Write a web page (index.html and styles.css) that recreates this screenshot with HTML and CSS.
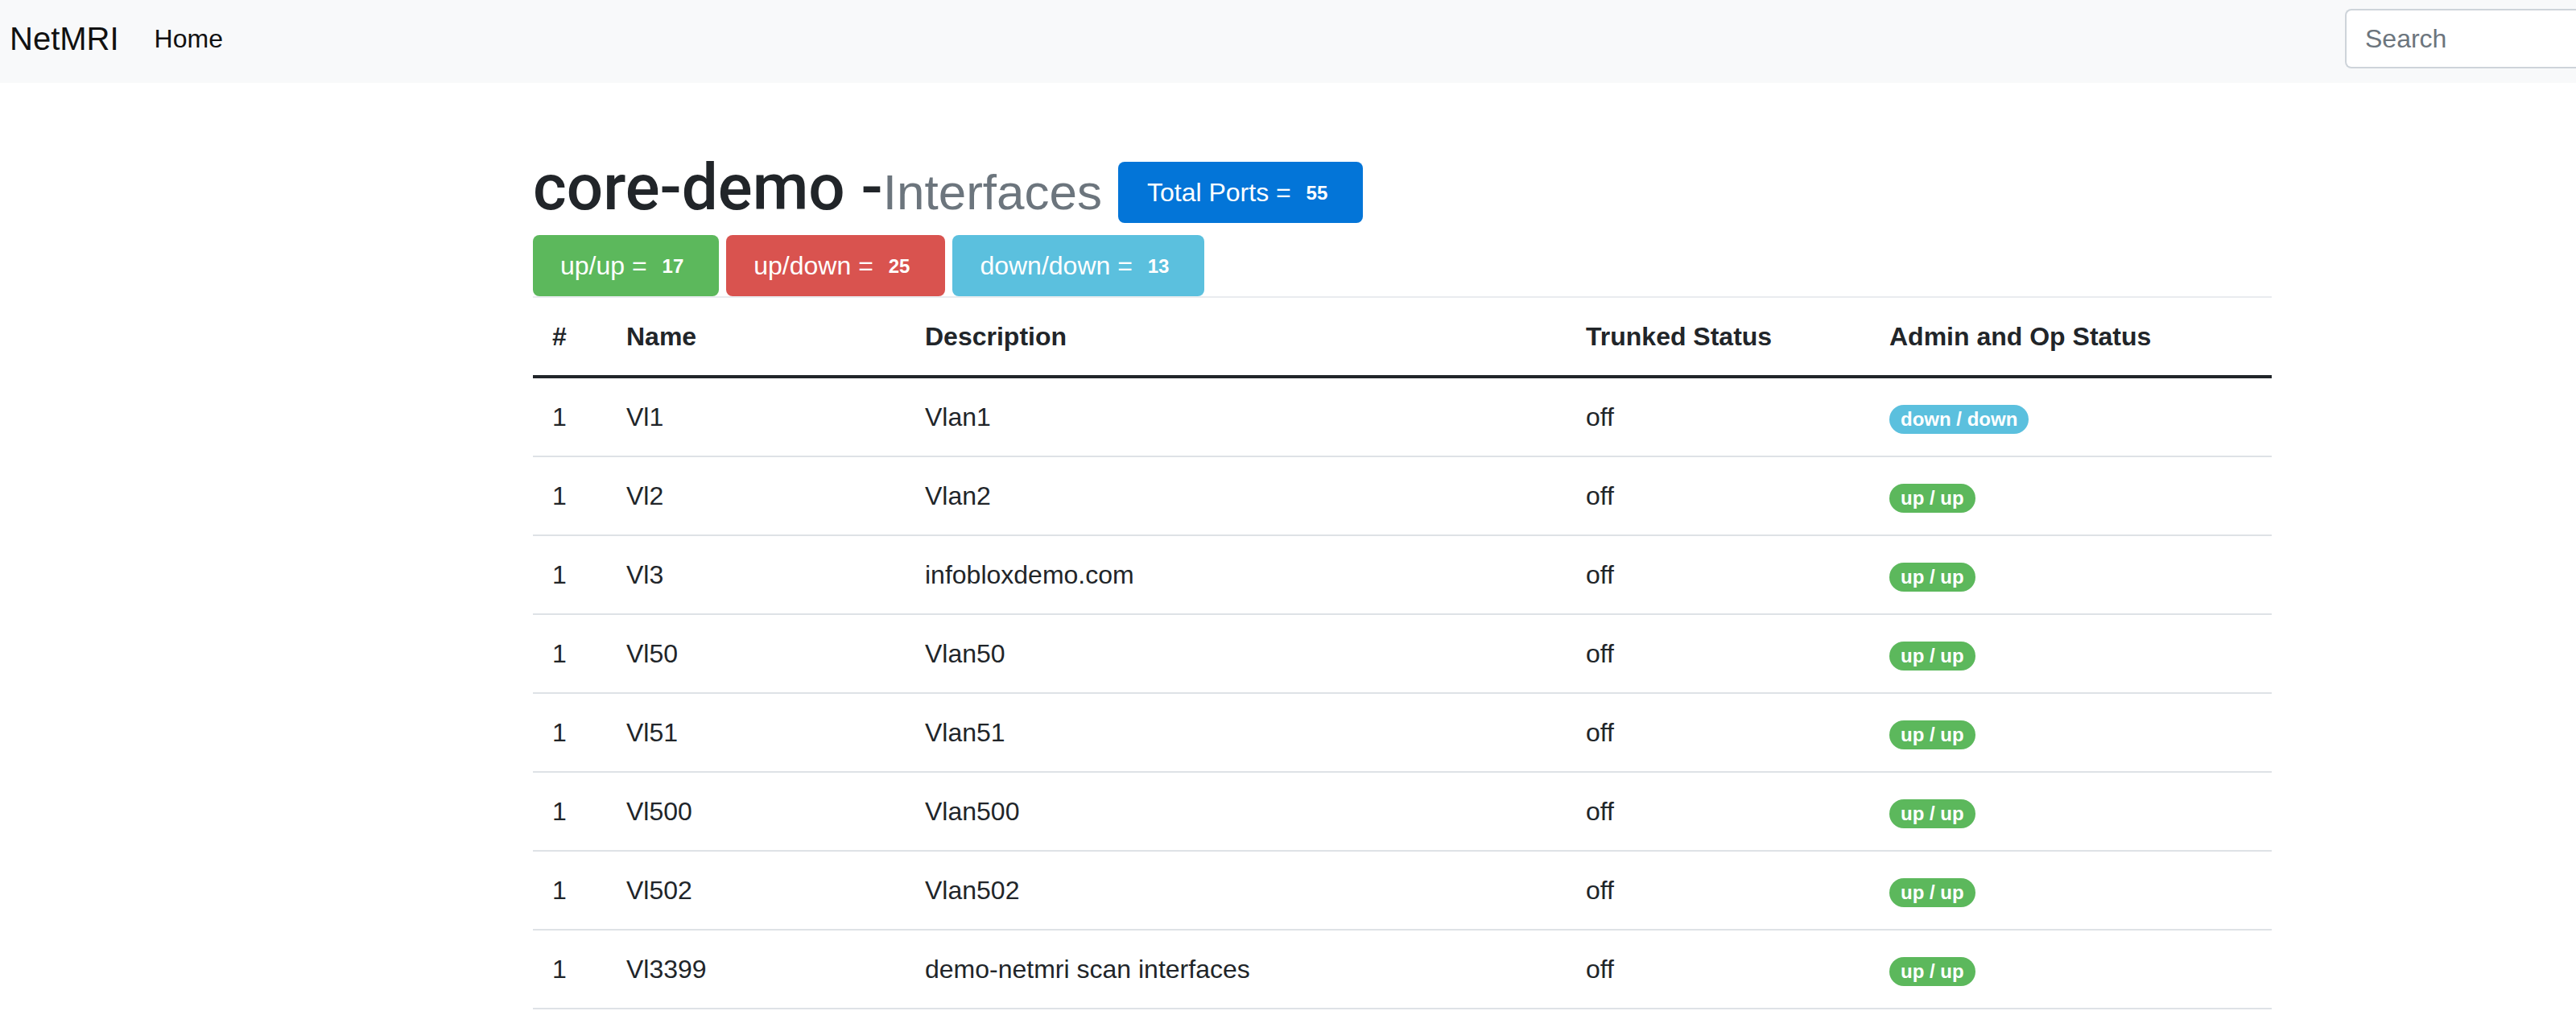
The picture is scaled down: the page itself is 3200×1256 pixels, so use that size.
FILE: index.html
```html
<!DOCTYPE html>
<html lang="en">
<head>
<meta charset="utf-8">
<title>NetMRI - core-demo Interfaces</title>
<link rel="stylesheet" href="styles.css">
</head>
<body>
<nav class="navbar">
  <a class="brand" href="#">NetMRI</a>
  <a class="nav-link" href="#">Home</a>
  <input class="search" type="text" placeholder="Search">
</nav>
<main class="main">
  <h1 class="title">core-demo -<small class="muted">Interfaces</small> <span class="btn btn-blue">Total Ports = <span class="badge">55</span></span></h1>
  <div class="status-row">
    <span class="btn btn-green">up/up = <span class="badge">17</span></span>
    <span class="btn btn-red">up/down = <span class="badge">25</span></span>
    <span class="btn btn-cyan">down/down = <span class="badge">13</span></span>
  </div>
  <table class="table">
    <colgroup>
      <col class="c-num"><col class="c-name"><col class="c-desc"><col class="c-trunk"><col class="c-status">
    </colgroup>
    <thead>
      <tr><th>#</th><th>Name</th><th>Description</th><th>Trunked Status</th><th>Admin and Op Status</th></tr>
    </thead>
    <tbody>
      <tr><td>1</td><td>Vl1</td><td>Vlan1</td><td>off</td><td><span class="pill pill-cyan">down / down</span></td></tr>
      <tr><td>1</td><td>Vl2</td><td>Vlan2</td><td>off</td><td><span class="pill pill-green">up / up</span></td></tr>
      <tr><td>1</td><td>Vl3</td><td>infobloxdemo.com</td><td>off</td><td><span class="pill pill-green">up / up</span></td></tr>
      <tr><td>1</td><td>Vl50</td><td>Vlan50</td><td>off</td><td><span class="pill pill-green">up / up</span></td></tr>
      <tr><td>1</td><td>Vl51</td><td>Vlan51</td><td>off</td><td><span class="pill pill-green">up / up</span></td></tr>
      <tr><td>1</td><td>Vl500</td><td>Vlan500</td><td>off</td><td><span class="pill pill-green">up / up</span></td></tr>
      <tr><td>1</td><td>Vl502</td><td>Vlan502</td><td>off</td><td><span class="pill pill-green">up / up</span></td></tr>
      <tr><td>1</td><td>Vl3399</td><td>demo-netmri scan interfaces</td><td>off</td><td><span class="pill pill-green">up / up</span></td></tr>
    </tbody>
  </table>
</main>
</body>
</html>
```
FILE: styles.css
```css
html, body {
  margin: 0;
  padding: 0;
  overflow: hidden;
}
body {
  font-family: "Liberation Sans", Arial, sans-serif;
  font-size: 32px;
  line-height: 48px;
  color: #212529;
  background: #fff;
}
a { text-decoration: none; }

.navbar {
  display: flex;
  align-items: center;
  height: 103px;
  box-sizing: border-box;
  padding: 0 0 7px 12px;
  background: #f8f9fa;
  overflow: hidden;
}
.brand {
  font-size: 40px;
  line-height: 60px;
  color: #111;
  margin-right: 44px;
}
.nav-link {
  font-size: 32px;
  color: #111;
}
.search {
  margin-left: auto;
  flex: 0 0 287px;
  width: 287px;
  height: 74px;
  box-sizing: border-box;
  border: 2px solid #ced4da;
  border-right: none;
  border-radius: 8px 0 0 8px;
  padding: 0 23px;
  font-family: "Liberation Sans", Arial, sans-serif;
  font-size: 32px;
  color: #495057;
  background: #fff;
  outline: none;
}
.search::placeholder { color: #6c757d; }

.main {
  padding: 82px 378px 0 662px;
}
.title {
  margin: 0 0 5px;
  font-family: Roboto, "Liberation Sans", sans-serif;
  font-weight: 500;
  font-size: 80px;
  line-height: 96px;
  color: #212529;
}
.muted {
  font-family: "Liberation Sans", Arial, sans-serif;
  font-weight: 400;
  font-size: 62px;
  color: #6c757d;
}
.btn {
  display: inline-block;
  box-sizing: border-box;
  height: 76px;
  padding: 12px 34px 12px 36px;
  border-radius: 8px;
  font-family: "Liberation Sans", Arial, sans-serif;
  font-size: 32px;
  font-weight: 400;
  line-height: 52px;
  color: #fff;
  white-space: nowrap;
}
.title .btn { vertical-align: middle; }
.btn-blue { background: #0375d8; }
.btn-green { background: #5cb85c; }
.btn-red { background: #d9534f; }
.btn-cyan { background: #5bc0de; }
.badge {
  display: inline-block;
  padding: 0 10px;
  font-size: 24px;
  font-weight: 700;
  line-height: 1;
  vertical-align: 2px;
}

.status-row {
  display: flex;
  gap: 9px;
}
.status-row .btn { padding: 12px 34px; }

.table {
  width: 2160px;
  table-layout: fixed;
  border-collapse: separate;
  border-spacing: 0;
  margin: 0;
}
.c-num { width: 92px; }
.c-name { width: 371px; }
.c-desc { width: 821px; }
.c-trunk { width: 377px; }
.c-status { width: 499px; }
.table th {
  text-align: left;
  font-weight: 700;
  padding: 24px;
  border-top: 2px solid #e9ecef;
  border-bottom: 4px solid #212529;
}
.table td {
  padding: 24px;
  border-bottom: 2px solid #dee2e6;
}
.pill {
  display: inline-block;
  padding: 6px 14px;
  border-radius: 999px;
  font-size: 24px;
  font-weight: 700;
  line-height: 24px;
  color: #fff;
}
.pill-green { background: #5cb85c; }
.pill-cyan { background: #5bc0de; }
```
